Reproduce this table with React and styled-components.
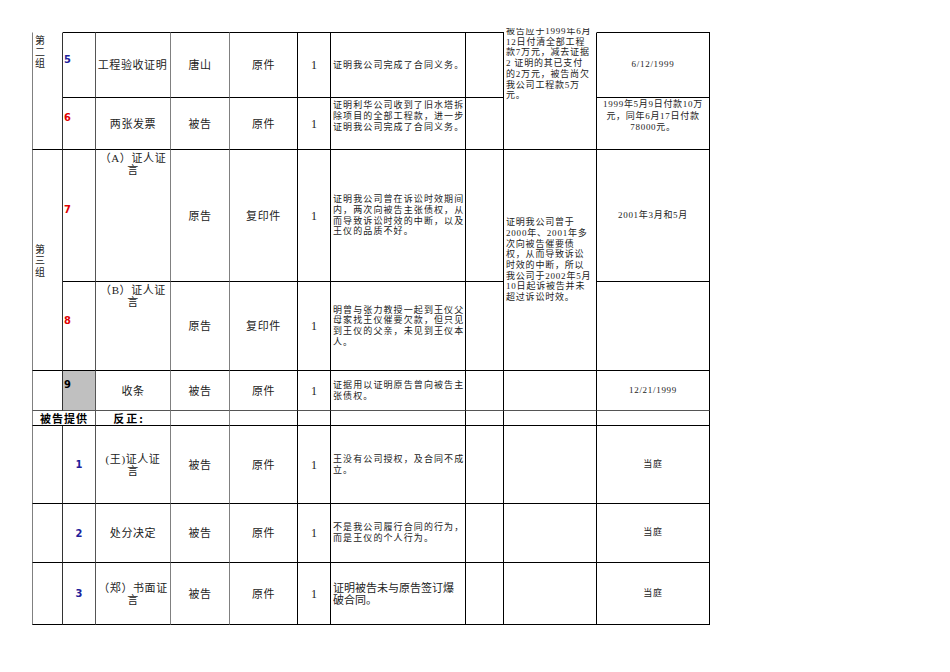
import React from 'react';
import styled, { createGlobalStyle } from 'styled-components';

const GlobalStyle = createGlobalStyle`
  html, body { margin: 0; padding: 0; background: #fff; }
  body { font-family: "Liberation Serif", "Noto Sans CJK SC", serif; color: #000; }
`;

const Sheet = styled.div`
  margin-top: 28px;
  padding: 4px 0 0 32px;
  overflow: hidden;
  height: 640px;
  box-sizing: border-box;
`;

const Grid = styled.table`
  border-collapse: separate;
  border-spacing: 0;
  table-layout: fixed;
  width: 678px;
`;

const Row = styled.tr`
  height: ${p => p.$h}px;
`;

const RIGHT = ['#333', '#555', '#808080', '#808080', '#000', '#000', '#000', '#000', '#000', '#000'];

const Cell = styled.td`
  box-sizing: border-box;
  padding: ${p => p.$pt || 0}px ${p => (p.$pr != null ? p.$pr : 2)}px ${p => p.$pb || 0}px ${p => (p.$pl != null ? p.$pl : 2)}px;
  border-right: 1px solid ${p => RIGHT[p.$col]};
  border-bottom: 1px solid ${p => p.$bc || '#000'};
  border-left: ${p => (p.$first ? '1px solid #808080' : 'none')};
  border-top: ${p => (p.$top ? `1px solid ${p.$top}` : 'none')};
  text-align: ${p => p.$align || 'center'};
  vertical-align: ${p => p.$valign || 'middle'};
  background: ${p => p.$bg || 'transparent'};
  white-space: pre;
  overflow: visible;
  font-size: 11px;
  line-height: 12px;
`;

const GroupLabel = styled.div`
  font-family: "Noto Sans CJK SC", sans-serif;
  font-size: 10px;
  line-height: 11.5px;
  color: #222;
`;

const Seq = styled.span`
  font-family: "Liberation Sans Narrow", "DejaVu Sans Condensed", "Liberation Sans", sans-serif;
  font-weight: bold;
  font-size: 11px;
  line-height: 12px;
  color: ${p => (p.$tone === 'red' ? '#e00000' : p.$tone === 'blue' ? '#20209a' : '#000')};
`;

const Item = styled.div`
  font-family: "Liberation Serif", "Noto Sans CJK SC", serif;
  font-size: 11px;
  line-height: 12px;
  letter-spacing: 0.6px;
  color: #222;
`;

const Count = styled.span`
  font-family: "Liberation Serif", serif;
  font-size: 12px;
  color: #222;
`;

const Note = styled.div`
  font-family: "Liberation Serif", "Noto Sans CJK SC", serif;
  font-size: ${p => (p.$big ? 11 : 9)}px;
  line-height: ${p => (p.$big ? 12 : 10.7)}px;
  letter-spacing: ${p => (p.$big ? 0 : p.$ls != null ? p.$ls : 1.1)}px;
  margin-top: ${p => p.$lift || 0}px;
  text-align: left;
  color: #222;
`;

const DateText = styled.div`
  font-family: "Liberation Serif", "Noto Sans CJK SC", serif;
  font-size: 9px;
  line-height: 11.5px;
  letter-spacing: 0.7px;
  color: #222;
`;

const HeadLabel = styled.span`
  font-family: "Noto Sans CJK SC", sans-serif;
  font-weight: bold;
  font-size: 11px;
  line-height: 14px;
  letter-spacing: ${p => p.$ls || 1}px;
`;

function Basic({ who, kind, top, bc }) {
  return (
    <>
      <Cell $col={3} $top={top} $bc={bc}><Item>{who}</Item></Cell>
      <Cell $col={4} $top={top} $bc={bc}><Item>{kind}</Item></Cell>
      <Cell $col={5} $top={top} $bc={bc}><Count>1</Count></Cell>
    </>
  );
}

export default function App() {
  return (
    <>
      <GlobalStyle />
      <Sheet>
        <Grid>
          <colgroup>
            <col style={{ width: 31 }} />
            <col style={{ width: 33 }} />
            <col style={{ width: 75 }} />
            <col style={{ width: 59 }} />
            <col style={{ width: 68 }} />
            <col style={{ width: 33 }} />
            <col style={{ width: 135 }} />
            <col style={{ width: 38 }} />
            <col style={{ width: 93 }} />
            <col style={{ width: 113 }} />
          </colgroup>
          <tbody>
            <Row $h={66}>
              <Cell $col={0} $first rowSpan={2} $top="transparent" $valign="top" $align="left" $pt={1}>
                <GroupLabel>{'第\n二\n组'}</GroupLabel>
              </Cell>
              <Cell $col={1} $top="#000" $align="left" $pl={1} $pb={12}><Seq $tone="blue">5</Seq></Cell>
              <Cell $col={2} $top="#000" $pl={1}><Item>工程验收证明</Item></Cell>
              <Basic who="唐山" kind="原件" top="#000" />
              <Cell $col={6} $top="#000" $align="left"><Note>证明我公司完成了合同义务。</Note></Cell>
              <Cell $col={7} $top="#000" />
              <Cell $col={8} rowSpan={2} $top="transparent" $valign="top" $align="left">
                <Note $ls={0.8} $lift={-7}>{'被告应于1999年6月\n12日付清全部工程\n款7万元，减去证据\n2 证明的其已支付\n的2万元，被告尚欠\n我公司工程款5万\n元。'}</Note>
              </Cell>
              <Cell $col={9} $top="#000"><DateText>6/12/1999</DateText></Cell>
            </Row>

            <Row $h={52}>
              <Cell $col={1} $align="left" $pl={1} $pb={12}><Seq $tone="red">6</Seq></Cell>
              <Cell $col={2}><Item>两张发票</Item></Cell>
              <Basic who="被告" kind="原件" />
              <Cell $col={6} $align="left" $pb={14}>
                <Note>{'证明利华公司收到了旧水塔拆\n除项目的全部工程款，进一步\n证明我公司完成了合同义务。'}</Note>
              </Cell>
              <Cell $col={7} />
              <Cell $col={9} $pb={14} $pl={0} $pr={0}>
                <DateText>{'1999年5月9日付款10万\n元，同年6月17日付款\n78000元。'}</DateText>
              </Cell>
            </Row>

            <Row $h={132}>
              <Cell $col={0} $first rowSpan={2} $align="left">
                <GroupLabel>{'第\n三\n组'}</GroupLabel>
              </Cell>
              <Cell $col={1} $align="left" $pl={1} $pb={12}><Seq $tone="red">7</Seq></Cell>
              <Cell $col={2} $valign="top" $pt={2}><Item>{'（A）证人证\n言'}</Item></Cell>
              <Basic who="原告" kind="复印件" />
              <Cell $col={6} $align="left">
                <Note>{'证明我公司曾在诉讼时效期间\n内，两次向被告主张债权，从\n而导致诉讼时效的中断，以及\n王仪的品质不好。'}</Note>
              </Cell>
              <Cell $col={7} />
              <Cell $col={8} rowSpan={2} $align="left">
                <Note $ls={0.8}>{'证明我公司曾于\n2000年、2001年多\n次向被告催要债\n权，从而导致诉讼\n时效的中断，所以\n我公司于2002年5月\n10日起诉被告并未\n超过诉讼时效。'}</Note>
              </Cell>
              <Cell $col={9}><DateText>2001年3月和5月</DateText></Cell>
            </Row>

            <Row $h={89}>
              <Cell $col={1} $align="left" $pl={1} $pb={12}><Seq $tone="red">8</Seq></Cell>
              <Cell $col={2} $valign="top" $pt={2}><Item>{'（B）证人证\n言'}</Item></Cell>
              <Basic who="原告" kind="复印件" />
              <Cell $col={6} $align="left">
                <Note>{'明曾与张力教授一起到王仪父\n母家找王仪催要欠款，但只见\n到王仪的父亲，未见到王仪本\n人。'}</Note>
              </Cell>
              <Cell $col={7} />
              <Cell $col={9} />
            </Row>

            <Row $h={40}>
              <Cell $col={0} $first $bc="#555" />
              <Cell $col={1} $bc="#555" $align="left" $pl={1} $pb={12} $bg="#c0c0c0"><Seq>9</Seq></Cell>
              <Cell $col={2} $bc="#555"><Item>收条</Item></Cell>
              <Basic who="被告" kind="原件" bc="#555" />
              <Cell $col={6} $bc="#555" $align="left">
                <Note>{'证据用以证明原告曾向被告主\n张债权。'}</Note>
              </Cell>
              <Cell $col={7} $bc="#555" />
              <Cell $col={8} $bc="#555" />
              <Cell $col={9} $bc="#555"><DateText>12/21/1999</DateText></Cell>
            </Row>

            <Row $h={15}>
              <Cell $col={1} $first colSpan={2}><HeadLabel>被告提供</HeadLabel></Cell>
              <Cell $col={2} $pr={10}><HeadLabel $ls={2}>反正:</HeadLabel></Cell>
              <Cell $col={3} />
              <Cell $col={4} />
              <Cell $col={5} />
              <Cell $col={6} />
              <Cell $col={7} />
              <Cell $col={8} />
              <Cell $col={9} />
            </Row>

            <Row $h={78}>
              <Cell $col={0} $first />
              <Cell $col={1}><Seq $tone="blue">1</Seq></Cell>
              <Cell $col={2}><Item>{'(王)证人证\n言'}</Item></Cell>
              <Basic who="被告" kind="原件" />
              <Cell $col={6} $align="left"><Note>{'王没有公司授权，及合同不成\n立。'}</Note></Cell>
              <Cell $col={7} />
              <Cell $col={8} />
              <Cell $col={9}><DateText>当庭</DateText></Cell>
            </Row>

            <Row $h={59}>
              <Cell $col={0} $first />
              <Cell $col={1}><Seq $tone="blue">2</Seq></Cell>
              <Cell $col={2}><Item>处分决定</Item></Cell>
              <Basic who="被告" kind="原件" />
              <Cell $col={6} $align="left"><Note>{'不是我公司履行合同的行为，\n而是王仪的个人行为。'}</Note></Cell>
              <Cell $col={7} />
              <Cell $col={8} />
              <Cell $col={9}><DateText>当庭</DateText></Cell>
            </Row>

            <Row $h={62}>
              <Cell $col={0} $first />
              <Cell $col={1}><Seq $tone="blue">3</Seq></Cell>
              <Cell $col={2}><Item>{'（郑）书面证\n言'}</Item></Cell>
              <Basic who="被告" kind="原件" />
              <Cell $col={6} $align="left"><Note $big>{'证明被告未与原告签订爆\n破合同。'}</Note></Cell>
              <Cell $col={7} />
              <Cell $col={8} />
              <Cell $col={9}><DateText>当庭</DateText></Cell>
            </Row>
          </tbody>
        </Grid>
      </Sheet>
    </>
  );
}
